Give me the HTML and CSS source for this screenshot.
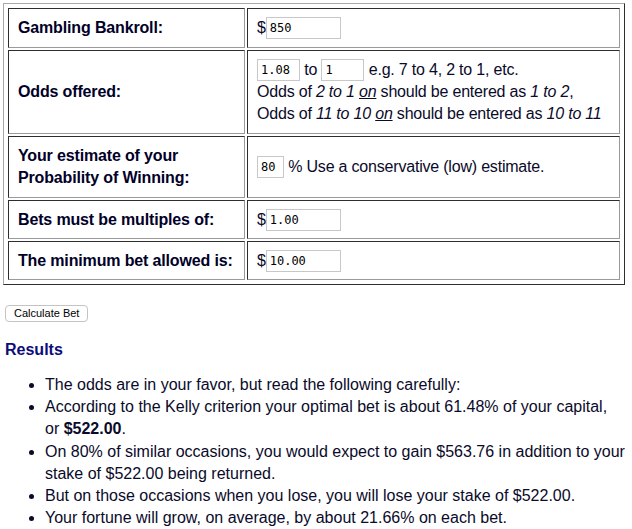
FILE: index.html
```html
<!DOCTYPE html>
<html>
<head>
<meta charset="utf-8">
<link rel="stylesheet" href="styles.css">
</head>
<body>
<table class="form">
  <tr>
    <th class="label">Gambling Bankroll:</th>
    <td class="value">$<input class="inp w-wide" type="text" value="850"></td>
  </tr>
  <tr>
    <th class="label">Odds offered:</th>
    <td class="value">
      <input class="inp w-odds" type="text" value="1.08"> to <input class="inp w-odds" type="text" value="1"> e.g. 7 to 4, 2 to 1, etc.<br>
      Odds of <i>2 to 1 <u>on</u></i> should be entered as <i>1 to 2</i>,<br>
      Odds of <i>11 to 10 <u>on</u></i> should be entered as <i>10 to 11</i>
    </td>
  </tr>
  <tr>
    <th class="label">Your estimate of your<br>Probability of Winning:</th>
    <td class="value"><input class="inp w-pct" type="text" value="80"> % Use a conservative (low) estimate.</td>
  </tr>
  <tr class="short">
    <th class="label">Bets must be multiples of:</th>
    <td class="value">$<input class="inp w-wide" type="text" value="1.00"></td>
  </tr>
  <tr class="short">
    <th class="label">The minimum bet allowed is:</th>
    <td class="value">$<input class="inp w-wide" type="text" value="10.00"></td>
  </tr>
</table>

<button class="calc" type="button">Calculate Bet</button>

<h3 class="results-title">Results</h3>
<ul class="results">
  <li>The odds are in your favor, but read the following carefully:</li>
  <li>According to the Kelly criterion your optimal bet is about 61.48% of your capital,<br>or <b>$522.00</b>.</li>
  <li>On 80% of similar occasions, you would expect to gain $563.76 in addition to your stake of $522.00 being returned.</li>
  <li>But on those occasions when you lose, you will lose your stake of $522.00.</li>
  <li>Your fortune will grow, on average, by about 21.66% on each bet.</li>
</ul>
</body>
</html>
```

FILE: styles.css
```css
body {
  margin: 3px;
  font-family: "Liberation Sans", Arial, sans-serif;
  font-size: 16px;
  color: #0a0a2a;
  background: #fff;
}

.form {
  width: 622px;
  border-collapse: separate;
  border-spacing: 2px;
  padding: 2px;
  border: 1px solid;
  border-color: #a8a8a8 #2e2e2e #2e2e2e #a8a8a8;
}

.form th,
.form td {
  border: 1px solid;
  border-color: #2e2e2e #9a9a9a #9a9a9a #2e2e2e;
  padding: 8px 9px;
  line-height: 22px;
  vertical-align: middle;
  white-space: nowrap;
}

.form .short th,
.form .short td {
  padding-top: 8px;
  padding-bottom: 7px;
}

.label {
  width: 217px;
  text-align: left;
  font-weight: bold;
  color: #000028;
  letter-spacing: -0.15px;
}

.value {
  color: #0a0a2a;
  letter-spacing: -0.2px;
}

.inp {
  box-sizing: border-box;
  height: 22px;
  padding: 1px 3px;
  border: 1px solid #c8c8c8;
  font-family: "DejaVu Sans Mono", "Liberation Mono", monospace;
  font-size: 12px;
  letter-spacing: 0;
  color: #000;
  vertical-align: top;
  margin: 0;
}

.w-wide { width: 75px; }
.w-odds { width: 43px; }
.w-pct { width: 27px; }

.calc {
  margin: 20px 2px 0;
  padding: 1px 8px;
  font-family: "Liberation Sans", Arial, sans-serif;
  font-size: 11px;
  color: #000;
  background: #fff;
  border: 1px solid #c4c4c4;
  border-radius: 4px;
  height: 17px;
  line-height: 13px;
}

.results-title {
  margin: 19px 2px 0;
  font-size: 16px;
  font-weight: bold;
  color: #0c0c7a;
}

.results {
  margin: 15px 0 0;
  padding-left: 42px;
  line-height: 22.2px;
}
```
